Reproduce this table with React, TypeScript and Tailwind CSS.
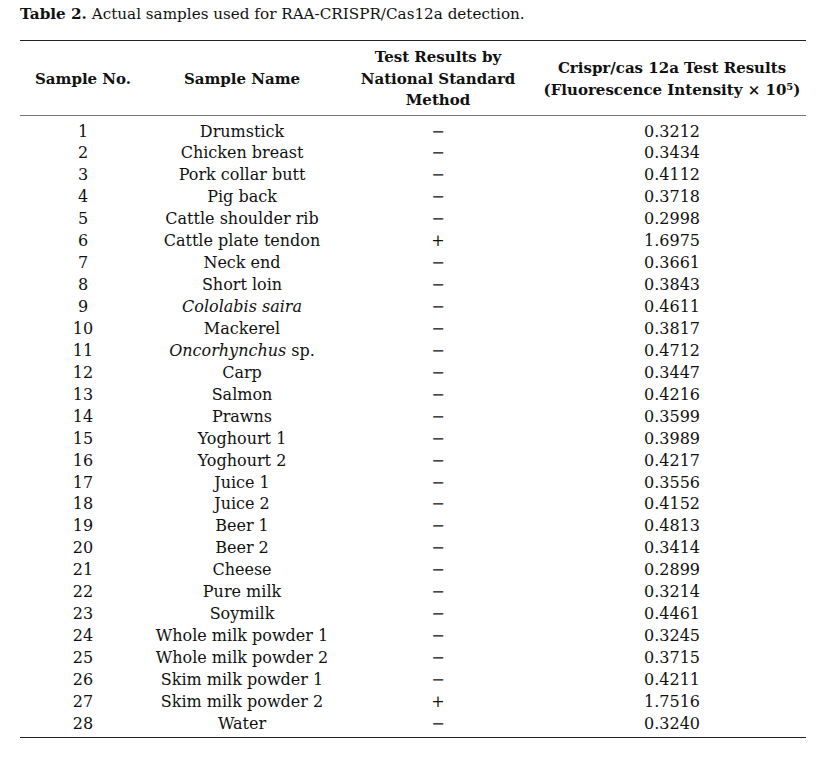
import React from "react";

const rows: [string, React.ReactNode, string, string][] = [
  ["1", "Drumstick", "−", "0.3212"],
  ["2", "Chicken breast", "−", "0.3434"],
  ["3", "Pork collar butt", "−", "0.4112"],
  ["4", "Pig back", "−", "0.3718"],
  ["5", "Cattle shoulder rib", "−", "0.2998"],
  ["6", "Cattle plate tendon", "+", "1.6975"],
  ["7", "Neck end", "−", "0.3661"],
  ["8", "Short loin", "−", "0.3843"],
  ["9", <i>Cololabis saira</i>, "−", "0.4611"],
  ["10", "Mackerel", "−", "0.3817"],
  ["11", <><i>Oncorhynchus</i> sp.</>, "−", "0.4712"],
  ["12", "Carp", "−", "0.3447"],
  ["13", "Salmon", "−", "0.4216"],
  ["14", "Prawns", "−", "0.3599"],
  ["15", "Yoghourt 1", "−", "0.3989"],
  ["16", "Yoghourt 2", "−", "0.4217"],
  ["17", "Juice 1", "−", "0.3556"],
  ["18", "Juice 2", "−", "0.4152"],
  ["19", "Beer 1", "−", "0.4813"],
  ["20", "Beer 2", "−", "0.3414"],
  ["21", "Cheese", "−", "0.2899"],
  ["22", "Pure milk", "−", "0.3214"],
  ["23", "Soymilk", "−", "0.4461"],
  ["24", "Whole milk powder 1", "−", "0.3245"],
  ["25", "Whole milk powder 2", "−", "0.3715"],
  ["26", "Skim milk powder 1", "−", "0.4211"],
  ["27", "Skim milk powder 2", "+", "1.7516"],
  ["28", "Water", "−", "0.3240"],
];

const App = () => {
  return (
    <div className="w-[820px] h-[759px] bg-white text-[#111] pl-[20px] pt-[4px] font-['DejaVu_Serif',serif]">
      <p className="text-[15.2px] leading-[20px]">
        <b>Table 2.</b> Actual samples used for RAA-CRISPR/Cas12a detection.
      </p>
      <table className="mt-[16px] w-[786px] table-fixed border-collapse border-t-[1.5px] border-b-[1.5px] border-[#222] text-[16px]">
        <colgroup>
          <col className="w-[126px]" />
          <col className="w-[192px]" />
          <col className="w-[200px]" />
          <col className="w-[268px]" />
        </colgroup>
        <thead>
          <tr className="border-b border-[#777] font-bold text-[15px] leading-[21.5px] whitespace-nowrap">
            <th className="h-[75px] pt-[3px]">Sample No.</th>
            <th className="pt-[3px]">Sample Name</th>
            <th className="pt-[3px]">
              Test Results by
              <br />
              National Standard
              <br />
              Method
            </th>
            <th className="pt-[3px]">
              Crispr/cas 12a Test Results
              <br />
              (Fluorescence Intensity × 10<sup className="text-[10px]">5</sup>)
            </th>
          </tr>
        </thead>
        <tbody>
          <tr className="h-[5px]"><td colSpan={4} /></tr>
          {rows.map((r) => (
            <tr key={r[0]} className="h-[21.93px] leading-[21.93px] text-center">
              <td>{r[0]}</td>
              <td>{r[1]}</td>
              <td>{r[2]}</td>
              <td>{r[3]}</td>
            </tr>
          ))}
          <tr className="h-[3px]"><td colSpan={4} /></tr>
        </tbody>
      </table>
    </div>
  );
};

export default App;
